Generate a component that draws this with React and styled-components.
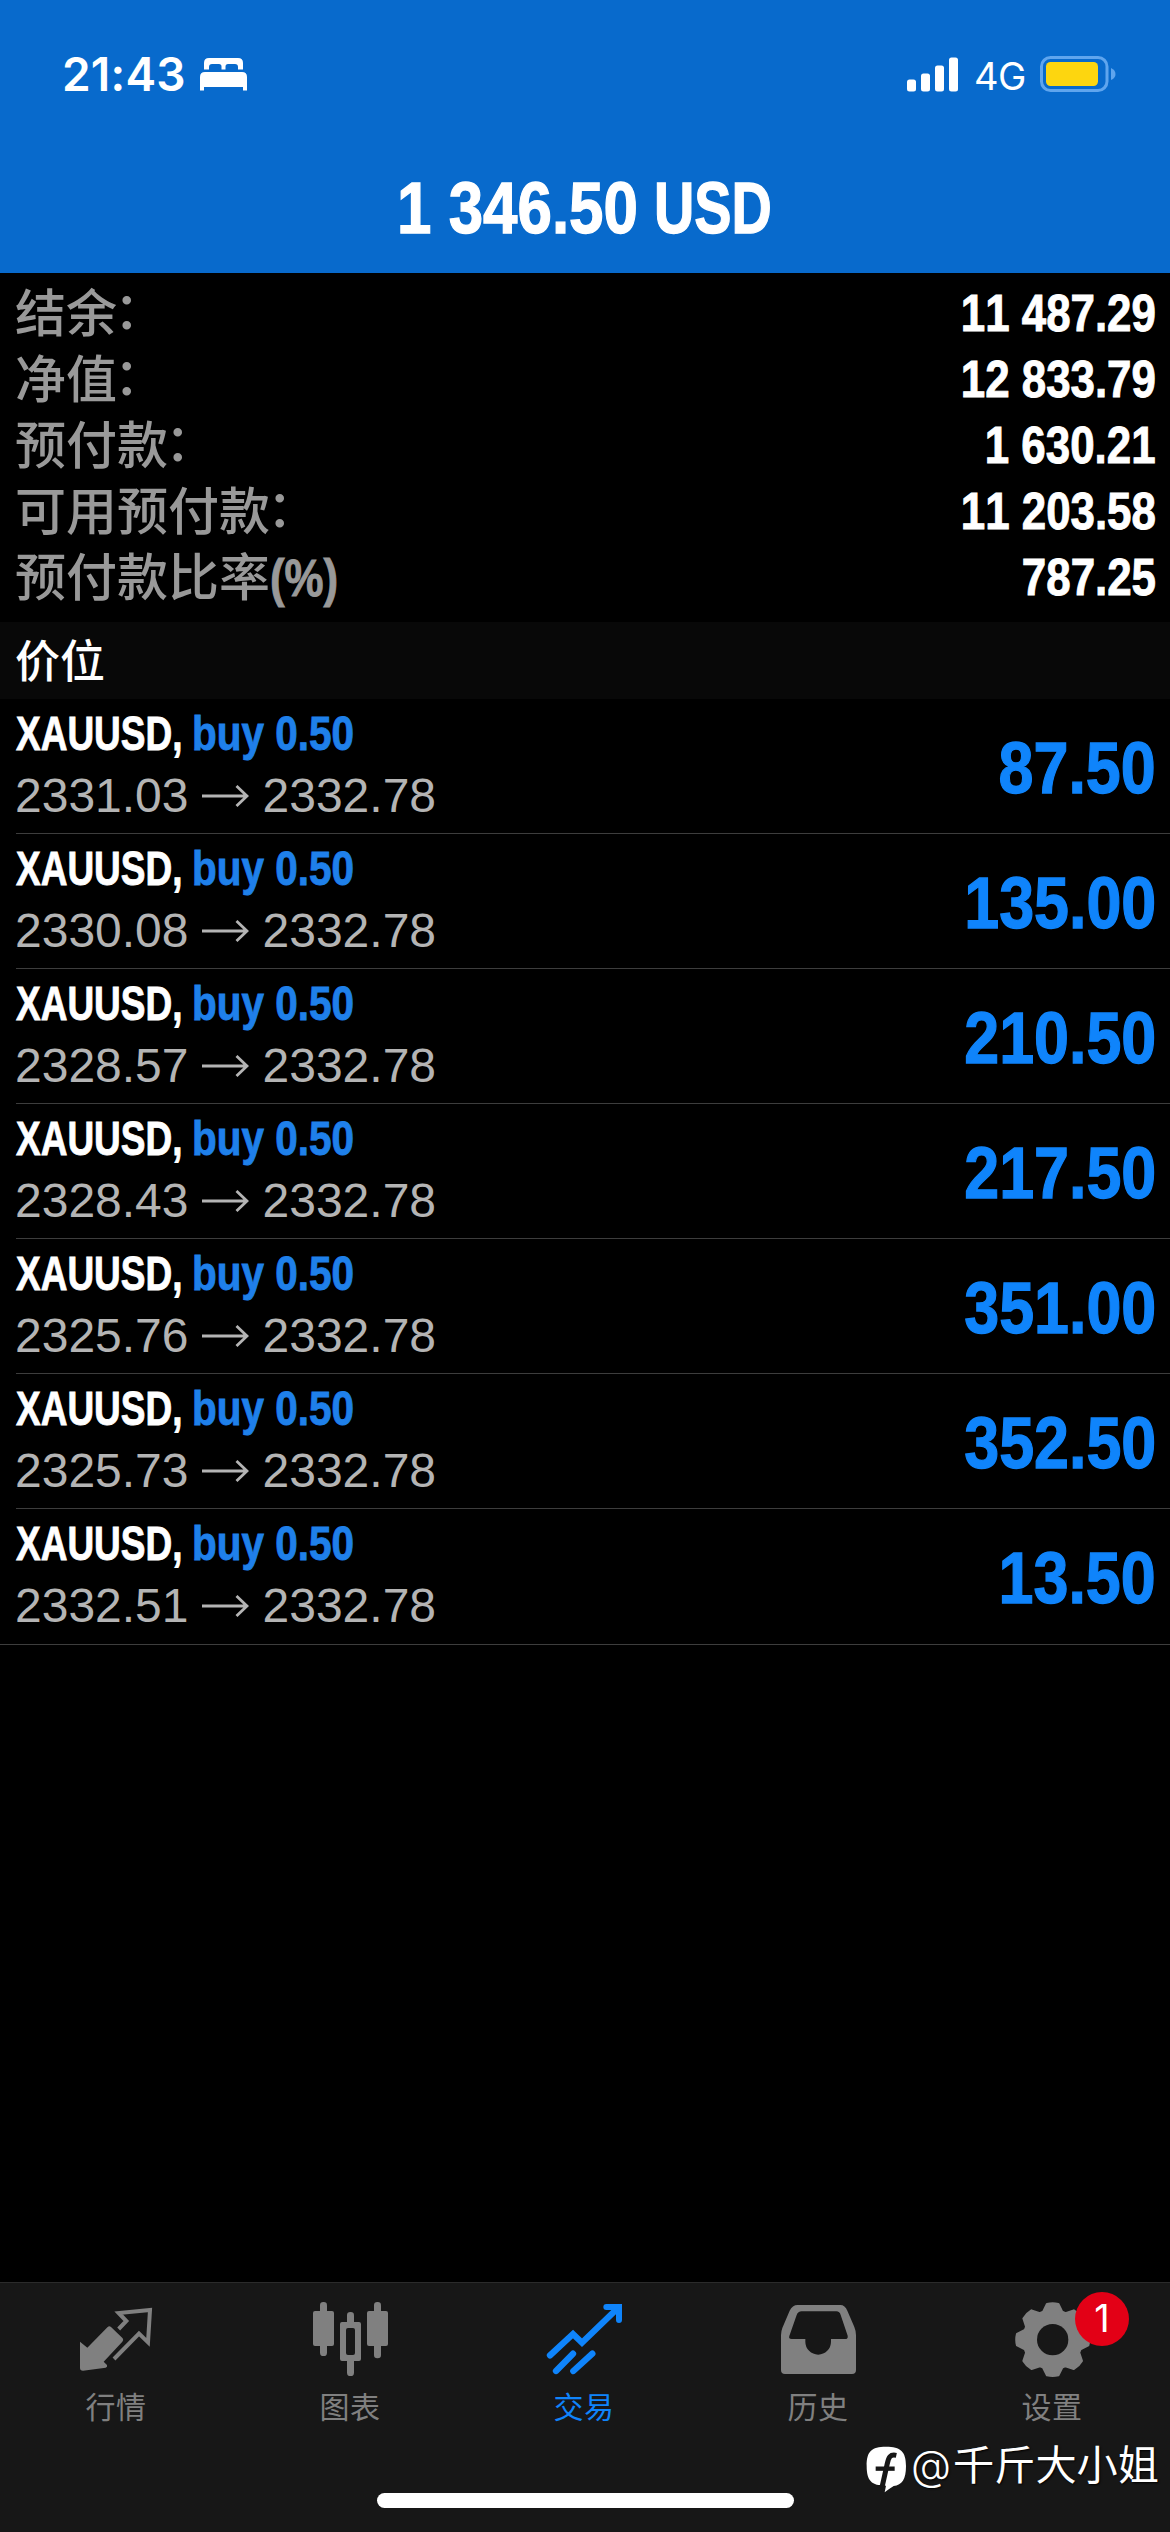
import React from 'react';
import styled, { createGlobalStyle } from 'styled-components';

const latin = '"Liberation Sans", "Noto Sans CJK SC", sans-serif';
const blue = '#0f84fb';

const GlobalStyle = createGlobalStyle`
  html, body {
    margin: 0;
    background: #000;
  }
  * {
    box-sizing: border-box;
  }
`;

const Screen = styled.div`
  position: relative;
  display: flex;
  flex-direction: column;
  width: 1170px;
  height: 2532px;
  overflow: hidden;
  background: #000;
  color: #fff;
  font-family: ${latin};
  font-kerning: none;
  white-space: nowrap;
`;

// Header
const Header = styled.header`
  height: 273px;
  flex-shrink: 0;
  background: #086acc;
`;

const StatusBar = styled.div`
  display: flex;
  align-items: center;
  justify-content: space-between;
  height: 148px;
  padding: 0 54px 0 62px;
  font-family: Inter, sans-serif;
`;

const StatusGroup = styled.div`
  display: flex;
  align-items: center;
`;

const Clock = styled.span`
  width: 138px;
  font-size: 46px;
  font-weight: 600;
  letter-spacing: 0.2px;
`;

const Network = styled.span`
  width: 81px;
  padding-left: 15px;
  padding-top: 3px;
  font-size: 38px;
  letter-spacing: -0.5px;
`;

const Title = styled.h1`
  display: flex;
  justify-content: center;
  margin: 0;
  padding-right: 2px;
  font-size: 73px;
  line-height: 119px;
`;

// Condensed bold text, the box keeps the squeezed width
const Condensed = styled.span`
  display: block;
  width: ${({ $width }) => ($width ? `${$width}px` : 'auto')};
  font-weight: bold;
  -webkit-text-stroke: 0.018em currentColor;
  transform: scaleX(${({ $ratio = 0.86 }) => $ratio});
  transform-origin: ${({ $from = 'left' }) => $from} center;
`;

// Account summary
const Summary = styled.section`
  padding: 8px 14px 11px 15px;
`;

const SummaryRow = styled.div`
  display: flex;
  justify-content: space-between;
  height: 66px;
  font-size: 51px;
  line-height: 66px;
`;

const SummaryLabel = styled.span`
  display: flex;
  padding-top: 1px;
  color: #999;
  font-weight: 500;
`;

const Colon = styled.span`
  margin-left: -3px;
  margin-top: -3px;
`;

const SectionTitle = styled.h2`
  height: 77px;
  margin: 0;
  padding: 3px 15px 0;
  background: #080808;
  font-size: 45px;
  font-weight: 500;
  line-height: 75px;
`;

// Positions
const Positions = styled.main`
  flex: 1;
`;

const Position = styled.div`
  display: flex;
  justify-content: space-between;
  height: 135px;
  margin-left: 16px;
  padding-right: 14px;
  border-bottom: 1px solid #3d3d3d;

  &:last-child {
    height: 136px;
    margin-left: 0;
    padding-left: 16px;
  }
`;

const Deal = styled.div`
  display: flex;
  height: 62px;
  padding-top: 6px;
  font-size: 49px;
  line-height: 56px;
`;

const Side = styled(Condensed)`
  color: #1f80ea;
`;

const Prices = styled.div`
  display: flex;
  align-items: center;
  height: 70px;
  margin-left: -1px;
  color: #b4b4b4;
  font-size: 48px;
  line-height: 70px;
`;

const Arrow = styled.svg`
  margin: 0 14px 0 13px;
`;

const Profit = styled(Condensed)`
  padding-top: 2px;
  color: ${blue};
  font-size: 73px;
  line-height: 134px;
`;

// Tab bar
const TabBar = styled.nav`
  display: grid;
  grid-template-columns: repeat(5, 1fr);
  height: 250px;
  padding-top: 15px;
  border-top: 1px solid #2b2b2b;
  background: #171717;
`;

const Tab = styled.div`
  position: relative;
  display: flex;
  flex-direction: column;
  align-items: center;
  color: ${({ $active }) => ($active ? blue : '#808080')};
`;

const TabLabel = styled.span`
  margin-top: 6px;
  padding-right: 2px;
  font-size: 30px;
  letter-spacing: 0.5px;
  line-height: 40px;
`;

const Badge = styled.span`
  position: absolute;
  top: -6px;
  left: 139px;
  width: 54px;
  height: 54px;
  border-radius: 50%;
  background: #e30016;
  color: #fff;
  font-family: Inter, sans-serif;
  font-size: 38px;
  line-height: 53px;
  text-align: center;
`;

const HomeIndicator = styled.div`
  position: absolute;
  left: 377px;
  bottom: 24px;
  width: 417px;
  height: 15px;
  border-radius: 8px;
  background: #fff;
`;

const Watermark = styled.div`
  position: absolute;
  right: 11px;
  bottom: 36px;
  display: flex;
  align-items: flex-start;
  height: 50px;
  font-family: "Noto Sans CJK SC", sans-serif;
  font-size: 41.2px;
  line-height: 32px;
  text-shadow: 1px 1px 2px #000;

  svg {
    margin-right: 4px;
  }
`;

const AtSign = styled.span`
  display: inline-block;
  width: 42px;
  font-family: Inter, sans-serif;
  font-weight: 300;
`;

const BedIcon = () => (
  <svg width="47" height="33" viewBox="0 0 47 33" fill="#fff">
    <path d="M4 11.500V5Q4 0 9 0H38Q43 0 43 5V11.500H38V9Q38 6 35 6H28Q25.500 6 25.500 8.500V11.500H21.500V8.500Q21.500 6 19 6H12Q9 6 9 9V11.500Z" />
    <path d="M0 32.500V19Q0 14 5 14H42Q47 14 47 19V32.500H43V29H4V32.500Z" />
  </svg>
);

const SignalIcon = () => (
  <svg width="52" height="35" viewBox="0 0 52 35" fill="#fff">
    <rect x="0" y="22.500" width="9" height="12" rx="2.500" />
    <rect x="14" y="16.500" width="9" height="18" rx="2.500" />
    <rect x="28" y="8.500" width="9" height="26" rx="2.500" />
    <rect x="42" y="0.500" width="9" height="34" rx="2.500" />
  </svg>
);

const BatteryIcon = () => (
  <svg width="76" height="36" viewBox="0 0 76 36">
    <rect x="1.500" y="1.500" width="65.500" height="33" rx="9" fill="none" stroke="#5fa5ee" strokeWidth="3" />
    <rect x="6" y="6" width="52" height="24" rx="4.500" fill="#fdd60f" />
    <path d="M71 12Q75.500 14 75.500 18T71 24Z" fill="#5fa5ee" />
  </svg>
);

const TabIcon = ({ children }) => (
  <svg width="84" height="84" viewBox="0 0 252 252" fill="currentColor">{children}</svg>
);

const QuotesIcon = () => (
  <TabIcon>
    <path d="M15 131L37 149L98 87Q103 82 108 87L143 121Q147 126 142 131L86 191L96 201Q98 207 92 209L24 218Q15 218 15 210Z" />
    <path d="M131 93L154 69L131 45L225 36L219 133L192 107L117 183" fill="none" stroke="currentColor" strokeWidth="12" />
  </TabIcon>
);

const ChartIcon = () => (
  <TabIcon>
    <rect x="12" y="39" width="63" height="105" rx="6" />
    <rect x="33" y="12" width="21" height="162" rx="10" />
    <path fillRule="evenodd" d="M99 72H150Q156 72 156 78V183Q156 189 150 189H99Q93 189 93 183V78Q93 72 99 72ZM117 90Q111 90 111 96V165Q111 171 117 171H132Q138 171 138 165V96Q138 90 132 90Z" />
    <rect x="114" y="42" width="21" height="44" rx="10" />
    <rect x="114" y="175" width="21" height="59" rx="10" />
    <rect x="174" y="39" width="63" height="105" rx="6" />
    <rect x="195" y="12" width="21" height="169" rx="10" />
  </TabIcon>
);

const TradeIcon = () => (
  <TabIcon>
    <g fill="none" stroke="currentColor" strokeWidth="19" strokeLinecap="round">
      <path d="M21 172L90 108L117 134L227 28" />
      <path d="M190 27H228V66" strokeWidth="18" />
      <path d="M39 219L90 167M91 219L148 167" />
    </g>
  </TabIcon>
);

const HistoryIcon = () => (
  <TabIcon>
    <path
      fillRule="evenodd"
      d="M12 112Q12 100 16 90L38 38Q46 21 62 21H190Q204 21 211 38L232 87Q237 99 237 112V216Q237 228 225 228H24Q12 228 12 216ZM37 114L59 51Q63 40 74 40H178Q188 40 191 51L212 113Q214 123 204 123H162V131A38.500 39 0 0 1 85 131V123H44Q34 123 37 114Z"
    />
  </TabIcon>
);

const polar = (r, deg) => {
  const a = (deg * Math.PI) / 180;
  return `${(125 + r * Math.sin(a)).toFixed(1)} ${(125 - r * Math.cos(a)).toFixed(1)}`;
};

const gearPath = [0, 45, 90, 135, 180, 225, 270, 315]
  .map((t, i) => `${i ? 'L' : 'M'}${polar(88, t - 19)}L${polar(108, t - 9)}Q${polar(111, t)} ${polar(108, t + 9)}L${polar(88, t + 19)}`)
  .join('');

const SettingsIcon = () => (
  <TabIcon>
    <path d={`${gearPath}Z`} stroke="currentColor" strokeWidth="7" strokeLinejoin="round" />
    <circle cx="125" cy="125" r="47" fill="#171717" />
  </TabIcon>
);

const WatermarkLogo = () => (
  <svg width="41" height="48" viewBox="0 0 123 144">
    <path d="M60 2C104 2 120 16 120 60C120 101 108 117 83 120Q70 128 56 139L60 119C16 119 2 104 2 60C2 16 16 2 60 2Z" fill="#fff" />
    <path d="M91 28C72 24 68 34 64 52L48 124" fill="none" stroke="#171717" strokeWidth="15" />
    <path d="M29 68H86" stroke="#171717" strokeWidth="13" />
  </svg>
);

const summary = [
  { label: '结余', unit: '：', value: '11 487.29' },
  { label: '净值', unit: '：', value: '12 833.79' },
  { label: '预付款', unit: '：', value: '1 630.21' },
  { label: '可用预付款', unit: '：', value: '11 203.58' },
  { label: '预付款比率', unit: '(%)', value: '787.25' },
];

const positions = [
  { open: '2331.03', profit: '87.50' },
  { open: '2330.08', profit: '135.00' },
  { open: '2328.57', profit: '210.50' },
  { open: '2328.43', profit: '217.50' },
  { open: '2325.76', profit: '351.00' },
  { open: '2325.73', profit: '352.50' },
  { open: '2332.51', profit: '13.50' },
];

const tabs = [
  { label: '行情', Icon: QuotesIcon },
  { label: '图表', Icon: ChartIcon },
  { label: '交易', Icon: TradeIcon, active: true },
  { label: '历史', Icon: HistoryIcon },
  { label: '设置', Icon: SettingsIcon, badge: 1 },
];

export default function App() {
  return (
    <Screen>
      <GlobalStyle />

      <Header>
        <StatusBar>
          <StatusGroup>
            <Clock>21:43</Clock>
            <BedIcon />
          </StatusGroup>
          <StatusGroup>
            <SignalIcon />
            <Network>4G</Network>
            <BatteryIcon />
          </StatusGroup>
        </StatusBar>
        <Title>
          <Condensed $width={257} $ratio={0.848}>1 346.50</Condensed>
          <Condensed $width={117} $ratio={0.765}>USD</Condensed>
        </Title>
      </Header>

      <Summary>
        {summary.map(({ label, unit, value }) => (
          <SummaryRow key={label}>
            <SummaryLabel>
              {label}
              {unit === '：' ? <Colon>{unit}</Colon> : <Condensed>{unit}</Condensed>}
            </SummaryLabel>
            <Condensed $from="right">{value}</Condensed>
          </SummaryRow>
        ))}
      </Summary>

      <SectionTitle>价位</SectionTitle>

      <Positions>
        {positions.map(({ open, profit }) => (
          <Position key={open}>
            <div>
              <Deal>
                <Condensed $width={176} $ratio={0.755}>XAUUSD,</Condensed>
                <Side $ratio={0.826}>buy 0.50</Side>
              </Deal>
              <Prices>
                {open}
                <Arrow width="47" height="22" viewBox="0 0 47 22" fill="none" stroke="currentColor" strokeWidth="2.800">
                  <path d="M0 11H45M34.500 1L45 11L34.500 21" />
                </Arrow>
                2332.78
              </Prices>
            </div>
            <Profit $from="right">{profit}</Profit>
          </Position>
        ))}
      </Positions>

      <TabBar>
        {tabs.map(({ label, Icon, active, badge }) => (
          <Tab key={label} $active={active}>
            <Icon />
            <TabLabel>{label}</TabLabel>
            {badge && <Badge>{badge}</Badge>}
          </Tab>
        ))}
      </TabBar>

      <HomeIndicator />
      <Watermark>
        <WatermarkLogo />
        <span>
          <AtSign>@</AtSign>
          千斤大小姐
        </span>
      </Watermark>
    </Screen>
  );
}
